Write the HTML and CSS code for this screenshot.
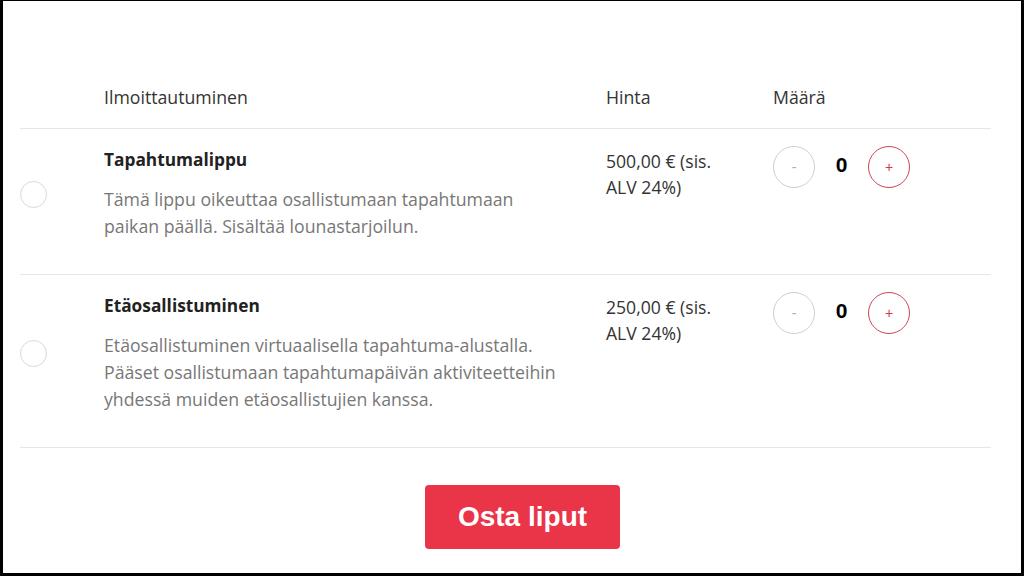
FILE: index.html
```html
<!DOCTYPE html>
<html lang="fi">
<head>
<meta charset="utf-8">
<title>Liput</title>
<link rel="stylesheet" href="styles.css">
</head>
<body>
<div class="frame">
  <div class="table">
    <div class="head">
      <div></div>
      <div>Ilmoittautuminen</div>
      <div>Hinta</div>
      <div>Määrä</div>
    </div>
    <div class="row">
      <div class="radio-cell"><span class="radio"></span></div>
      <div class="info">
        <div class="title">Tapahtumalippu</div>
        <p class="desc">Tämä lippu oikeuttaa osallistumaan tapahtumaan paikan päällä. Sisältää lounastarjoilun.</p>
      </div>
      <div class="price">500,00 € (sis. ALV 24%)</div>
      <div class="qty">
        <button class="step minus">-</button>
        <span class="count">0</span>
        <button class="step plus">+</button>
      </div>
    </div>
    <div class="row">
      <div class="radio-cell"><span class="radio"></span></div>
      <div class="info">
        <div class="title">Etäosallistuminen</div>
        <p class="desc">Etäosallistuminen virtuaalisella tapahtuma-alustalla. Pääset osallistumaan tapahtumapäivän aktiviteetteihin yhdessä muiden etäosallistujien kanssa.</p>
      </div>
      <div class="price">250,00 € (sis. ALV 24%)</div>
      <div class="qty">
        <button class="step minus">-</button>
        <span class="count">0</span>
        <button class="step plus">+</button>
      </div>
    </div>
  </div>
  <div class="actions">
    <button class="buy">Osta liput</button>
  </div>
</div>
</body>
</html>
```
FILE: styles.css
```css
* { box-sizing: border-box; }
html, body { margin: 0; padding: 0; background: #fff; }
body {
  font-family: "Open Sans", "Noto Sans", sans-serif;
  color: #333;
}
.frame {
  width: 1024px;
  height: 576px;
  border-style: solid;
  border-color: #000;
  border-width: 1px 3px 3px 3px;
  overflow: hidden;
}
.table {
  margin-left: 17px;
  width: 971px;
}
.head, .row {
  display: grid;
  grid-template-columns: 84px 502px 167px 1fr;
}
.head {
  padding: 84px 0 19px;
  font-size: 17.7px;
  line-height: 24px;
  color: #333;
}
.row {
  border-top: 1px solid #e6e6e6;
  padding: 19px 0 34px;
}
.row:last-child { border-bottom: 1px solid #e6e6e6; }
.radio-cell { align-self: center; }
.radio {
  display: block;
  width: 27px;
  height: 27px;
  border-radius: 50%;
  border: 1px solid #d9d9d9;
  background: #fff;
}
.title {
  font-weight: 700;
  font-size: 17.3px;
  line-height: 24px;
  color: #222;
}
.desc {
  margin: 14px 0 0;
  max-width: 462px;
  font-size: 17.7px;
  line-height: 27px;
  color: #777;
}
.price {
  max-width: 125px;
  font-size: 17.6px;
  line-height: 26px;
  color: #333;
}
.qty {
  display: flex;
  align-items: center;
  margin-top: -2px;
  align-self: start;
}
.step {
  width: 42px;
  height: 42px;
  border-radius: 50%;
  background: #fff;
  padding: 0;
  font-family: "Liberation Sans", Arial, sans-serif;
  font-size: 14px;
  line-height: 1;
  cursor: pointer;
}
.minus { border: 1px solid #cfcfcf; color: #aaa; }
.plus { border: 1px solid #c8485a; color: #d8344c; }
.count {
  width: 53px;
  text-align: center;
  font-family: "Liberation Sans", Arial, sans-serif;
  font-weight: 700;
  font-size: 21px;
  color: #000;
  margin-top: -4px;
}
.actions {
  display: flex;
  justify-content: center;
  padding-left: 21px;
  margin-top: 37px;
}
.buy {
  width: 195px;
  height: 64px;
  border: none;
  border-radius: 4px;
  background: #ea3447;
  color: #fff;
  font-family: "Liberation Sans", Arial, sans-serif;
  font-weight: 700;
  font-size: 28px;
  cursor: pointer;
}
```
